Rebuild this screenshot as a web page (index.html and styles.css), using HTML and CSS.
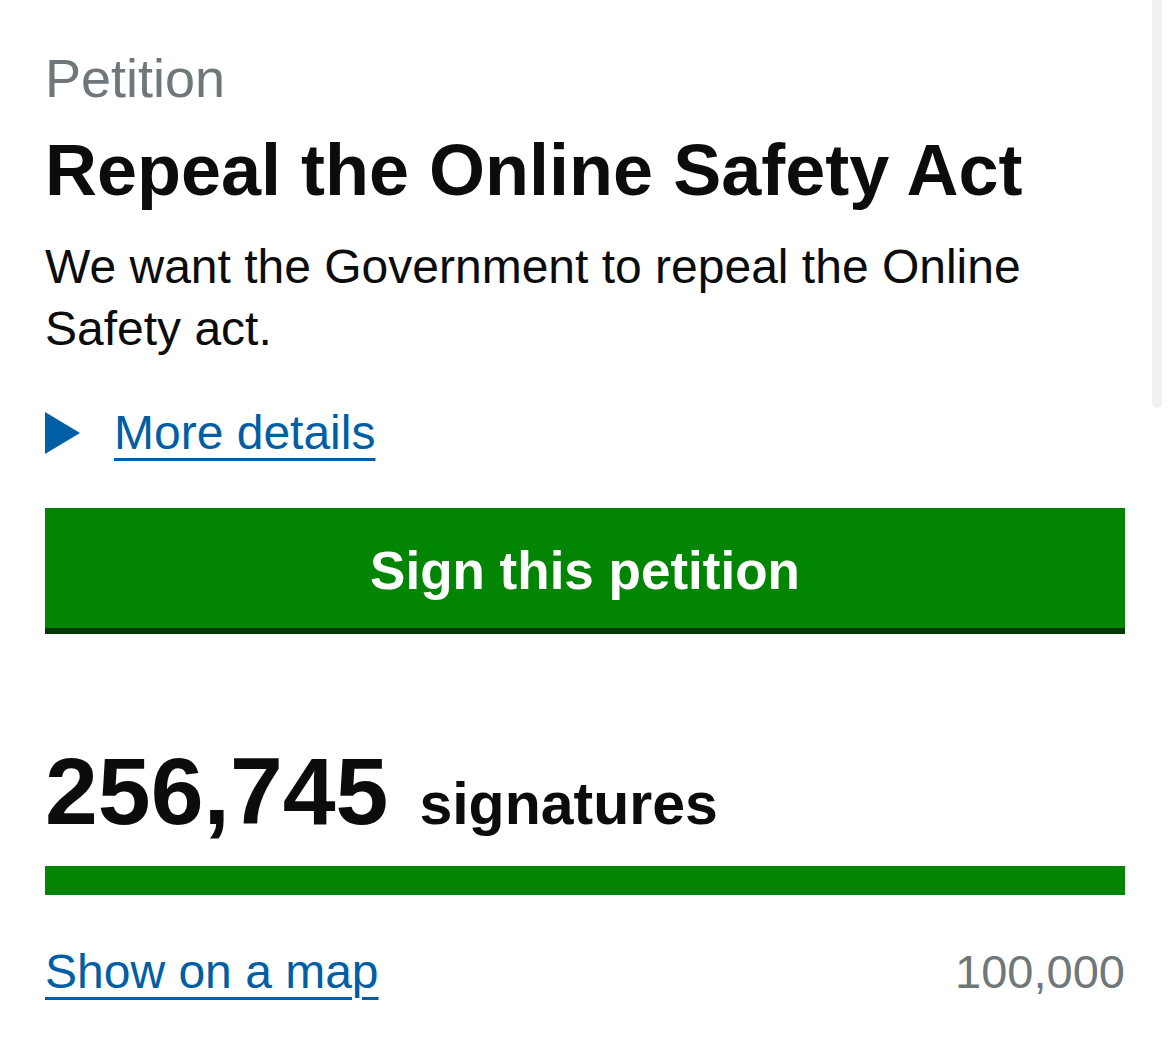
FILE: index.html
```html
<!DOCTYPE html>
<html lang="en">
<head>
  <meta charset="UTF-8">
  <title>Repeal the Online Safety Act – Petitions</title>
  <link rel="stylesheet" href="styles.css">
</head>
<body>

<main class="petition">
  <p class="caption">Petition</p>
  <h1 class="title">Repeal the Online Safety Act</h1>
  <p class="lede">We want the Government to repeal the Online Safety act.</p>

  <div class="details">
    <svg class="details-arrow" width="35" height="42" viewBox="0 0 35 42" aria-hidden="true">
      <polygon points="0,0 35,21 0,42" fill="#005ea5"/>
    </svg>
    <a href="#" class="link">More details</a>
  </div>

  <button class="sign">Sign this petition</button>

  <div class="count">
    <span class="count-num">256,745</span>
    <span class="count-label">signatures</span>
  </div>

  <div class="progress"><div class="progress-bar" style="width: 100%"></div></div>

  <div class="progress-foot">
    <a href="#" class="link">Show on a map</a>
    <span class="threshold">100,000</span>
  </div>
</main>

<div class="scroll-thumb"></div>

</body>
</html>
```

FILE: styles.css
```css
body {
  font-family: "Liberation Sans", Arial, Helvetica, sans-serif;
  background: #fff;
  color: #0b0c0c;
  margin: 0; padding: 0;
}
.petition { padding: 48px 45px 40px; }
.caption { margin: 0; font-size: 54px; line-height: 60px; color: #6f777b; }
.title { margin: 22px 0 0; font-size: 72px; line-height: 80px; font-weight: bold; }
.lede { margin: 26px 0 0; font-size: 48px; line-height: 62.4px; }

.link { color: #005ea5; text-decoration: underline; text-decoration-thickness: 3px; text-underline-offset: 9px; }

.details { display: flex; align-items: center; gap: 34px; margin-top: 42px; font-size: 48px; line-height: 60px; }
.details-arrow { display: block; flex: none; }

.sign {
  display: block; width: 100%;
  margin-top: 45px;
  padding: 33px 0 27px;
  border: none; border-bottom: 6px solid #023802; border-radius: 0;
  background: #028502; color: #fff;
  font-family: inherit; font-size: 53px; line-height: 60px; font-weight: bold;
  cursor: pointer;
}

.count { display: flex; align-items: baseline; gap: 31px; margin-top: 107px; font-weight: bold; }
.count-num { font-size: 95px; line-height: 100px; }
.count-label { font-size: 59px; line-height: 70px; }

.progress { margin-top: 25px; height: 29px; background: #dee0e2; }
.progress-bar { height: 100%; background: #028502; }

.progress-foot { display: flex; justify-content: space-between; align-items: baseline; margin-top: 47px; font-size: 48px; line-height: 60px; }
.threshold { font-size: 47px; color: #6f777b; }

.scroll-thumb { position: absolute; top: 0; right: 8px; width: 10px; height: 408px; border-radius: 0 0 5px 5px; background: #f0f0f0; }
```
